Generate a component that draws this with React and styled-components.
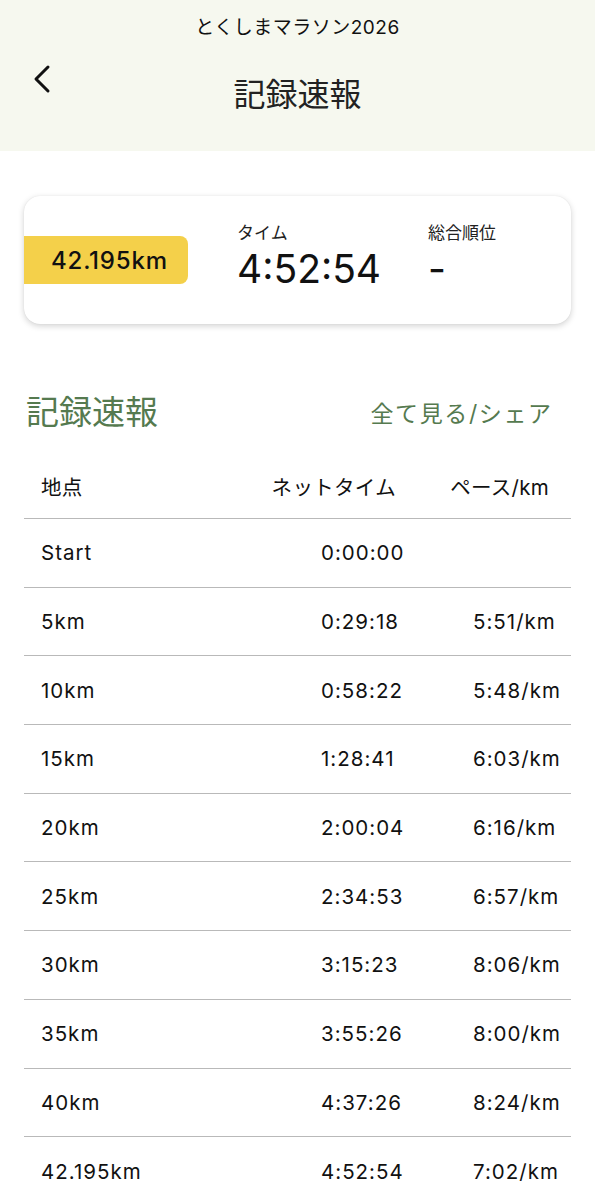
import styled, { createGlobalStyle } from "styled-components";

const GlobalStyle = createGlobalStyle`
  html, body {
    margin: 0;
    padding: 0;
    background: #ffffff;
  }
  body {
    font-family: Inter, "Noto Sans CJK JP", sans-serif;
    color: #111;
  }
`;

const splits = [
  { point: "Start", time: "0:00:00", pace: "" },
  { point: "5km", time: "0:29:18", pace: "5:51/km" },
  { point: "10km", time: "0:58:22", pace: "5:48/km" },
  { point: "15km", time: "1:28:41", pace: "6:03/km" },
  { point: "20km", time: "2:00:04", pace: "6:16/km" },
  { point: "25km", time: "2:34:53", pace: "6:57/km" },
  { point: "30km", time: "3:15:23", pace: "8:06/km" },
  { point: "35km", time: "3:55:26", pace: "8:00/km" },
  { point: "40km", time: "4:37:26", pace: "8:24/km" },
  { point: "42.195km", time: "4:52:54", pace: "7:02/km" },
];

const App = () => {
  return (
    <Page>
      <GlobalStyle />
      <Header>
        <EventName>とくしまマラソン2026</EventName>
        <NavRow>
          <BackButton aria-label="戻る">
            <svg width="22" height="30" viewBox="0 0 22 30" fill="none">
              <path d="M17 3 L5 15 L17 27" stroke="#111" strokeWidth="3" strokeLinecap="round" strokeLinejoin="round" />
            </svg>
          </BackButton>
          <PageTitle>記録速報</PageTitle>
        </NavRow>
      </Header>

      <Body>
        <SummaryCard>
          <DistanceBadge>42.195km</DistanceBadge>
          <Stat>
            <StatLabel>タイム</StatLabel>
            <StatValue>4:52:54</StatValue>
          </Stat>
          <Stat>
            <StatLabel>総合順位</StatLabel>
            <StatValue>-</StatValue>
          </Stat>
        </SummaryCard>

        <SectionHead>
          <SectionTitle>記録速報</SectionTitle>
          <SectionLink>全て見る/シェア</SectionLink>
        </SectionHead>

        <Table>
          <HeadRow>
            <Cell>地点</Cell>
            <Cell $align="right">ネットタイム</Cell>
            <Cell $align="right">ペース/km</Cell>
          </HeadRow>
          {splits.map((s) => (
            <Row key={s.point}>
              <Cell>{s.point}</Cell>
              <Cell>{s.time}</Cell>
              <Cell>{s.pace}</Cell>
            </Row>
          ))}
        </Table>
      </Body>
    </Page>
  );
};

const Page = styled.div`
  width: 595px;
  min-height: 1200px;
  background: #fff;
`;

const Header = styled.header`
  background: #f6f8ef;
  height: 151px;
  box-sizing: border-box;
  padding-top: 14px;
  display: flex;
  flex-direction: column;
  align-items: center;
`;

const EventName = styled.div`
  font-size: 19px;
  line-height: 28px;
  letter-spacing: 0.5px;
  color: #111;
`;

const NavRow = styled.div`
  position: relative;
  width: 100%;
  display: flex;
  justify-content: center;
  margin-top: 31px;
`;

const BackButton = styled.div`
  position: absolute;
  left: 31px;
  top: -9px;
  display: flex;
`;

const PageTitle = styled.h1`
  margin: 0;
  font-size: 32px;
  font-weight: 400;
  line-height: 44px;
  color: #222;
`;

const Body = styled.main`
  padding: 45px 24px 0;
`;

const SummaryCard = styled.section`
  height: 128px;
  background: #fff;
  border-radius: 16px;
  box-shadow: 0 2px 6px rgba(0, 0, 0, 0.18), 0 0 1px rgba(0, 0, 0, 0.1);
  display: grid;
  grid-template-columns: 213px 191px 1fr;
  align-items: center;
`;

const DistanceBadge = styled.div`
  width: 164px;
  height: 48px;
  box-sizing: border-box;
  padding-left: 27px;
  background: #f4d04a;
  border-radius: 0 8px 8px 0;
  display: flex;
  align-items: center;
  font-size: 24px;
  font-weight: 500;
  letter-spacing: 0.8px;
  color: #111;
`;

const Stat = styled.div`
  display: flex;
  flex-direction: column;
  margin-top: -6px;
`;

const StatLabel = styled.div`
  font-size: 17px;
  line-height: 24px;
  color: #222;
`;

const StatValue = styled.div`
  font-size: 39px;
  line-height: 48px;
  color: #111;
`;

const SectionHead = styled.div`
  display: flex;
  justify-content: space-between;
  align-items: center;
  margin-top: 66px;
  padding: 0 20px 0 2px;
`;

const SectionTitle = styled.h2`
  margin: 0;
  font-size: 33px;
  font-weight: 400;
  line-height: 44px;
  color: #557a4f;
`;

const SectionLink = styled.a`
  font-size: 23px;
  color: #557a4f;
  letter-spacing: 1.6px;
  margin-right: -1.6px;
  cursor: pointer;
`;

const Table = styled.div`
  margin-top: 20px;
`;

const Row = styled.div`
  display: grid;
  grid-template-columns: 280px 152px 1fr;
  align-items: center;
  height: 67.7px;
  padding-left: 17px;
  border-bottom: 1.3px solid #b9b9b9;
  font-size: 20.5px;
  letter-spacing: 1px;
  color: #111;

  &:last-child {
    border-bottom: none;
  }
`;

const HeadRow = styled(Row)`
  grid-template-columns: 1fr 126px 153px;
  height: 64px;
  padding-right: 22px;
  letter-spacing: 0.3px;
`;

const Cell = styled.div`
  text-align: ${(p) => p.$align || "left"};
  white-space: nowrap;
`;

export default App;
